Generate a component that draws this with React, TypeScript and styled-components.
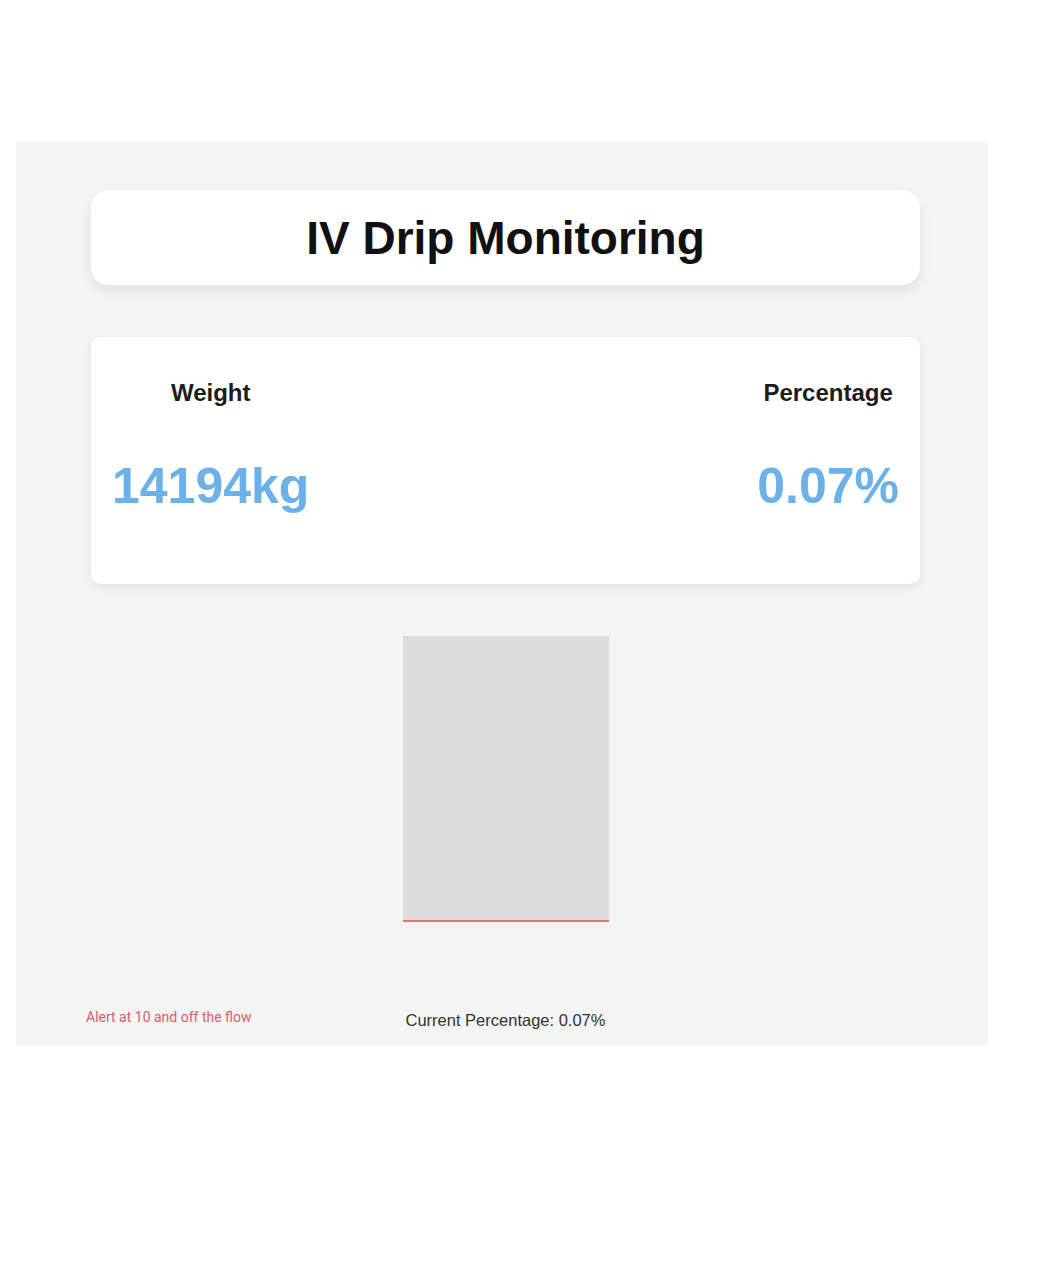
import React from 'react';
import styled, { createGlobalStyle } from 'styled-components';

const GlobalStyle = createGlobalStyle`
  html, body {
    margin: 0;
    padding: 0;
    background: #ffffff;
    font-family: 'Liberation Sans', Arial, sans-serif;
  }
`;

const Page = styled.div`
  width: 1040px;
  min-height: 1280px;
  padding-top: 142px;
  box-sizing: border-box;
`;

const Panel = styled.main`
  margin-left: 16px;
  width: 972px;
  box-sizing: border-box;
  padding: 48px 68px 16px 75px;
  background: #f4f4f4;
  display: flex;
  flex-direction: column;
  align-items: stretch;
`;

const TitleCard = styled.header`
  height: 95px;
  border-radius: 18px;
  background: #ffffff;
  box-shadow: 0 6px 14px rgba(0, 0, 0, 0.08);
  display: flex;
  align-items: center;
  justify-content: center;
`;

const Title = styled.h1`
  margin: 0;
  font-size: 46px;
  line-height: 52px;
  font-weight: 700;
  color: #111111;
`;

const StatsCard = styled.section`
  margin-top: 52px;
  height: 247px;
  box-sizing: border-box;
  padding: 42px 21px 0;
  border-radius: 10px;
  background: #ffffff;
  box-shadow: 0 4px 12px rgba(0, 0, 0, 0.07);
  display: flex;
  justify-content: space-between;
  align-items: flex-start;
`;

const Stat = styled.div`
  display: flex;
  flex-direction: column;
  align-items: center;
`;

const StatLabel = styled.div`
  font-size: 24px;
  line-height: 28px;
  font-weight: 700;
  color: #1c1c1c;
`;

const StatValue = styled.div`
  margin-top: 50px;
  font-size: 50px;
  line-height: 58px;
  font-weight: 700;
  color: #6db1e9;
`;

const BarTrack = styled.div`
  margin: 52px auto 0;
  width: 206px;
  height: 286px;
  background: #dddddd;
  display: flex;
  flex-direction: column;
  justify-content: flex-end;
`;

const BarFill = styled.div`
  background: #e07a7a;
  border-top: 2px solid #e27474;
`;

const Footer = styled.footer`
  margin-top: 86px;
  display: grid;
  grid-template-columns: 1fr auto 1fr;
  align-items: end;
`;

const Alert = styled.div`
  margin-left: -5px;
  padding-bottom: 4px;
  font-family: Roboto, 'Liberation Sans', sans-serif;
  font-size: 14px;
  line-height: 18px;
  color: #d9606a;
`;

const Current = styled.div`
  font-size: 16.5px;
  line-height: 20px;
  color: #333333;
`;

export default function App() {
  const weight = 14194;
  const percentage = 0.07;

  return (
    <Page>
      <GlobalStyle />
      <Panel>
        <TitleCard>
          <Title>IV Drip Monitoring</Title>
        </TitleCard>

        <StatsCard>
          <Stat>
            <StatLabel>Weight</StatLabel>
            <StatValue>{weight}kg</StatValue>
          </Stat>
          <Stat>
            <StatLabel>Percentage</StatLabel>
            <StatValue>{percentage.toFixed(2)}%</StatValue>
          </Stat>
        </StatsCard>

        <BarTrack>
          <BarFill style={{ height: `${percentage}%` }} />
        </BarTrack>

        <Footer>
          <Alert>Alert at 10 and off the flow</Alert>
          <Current>Current Percentage: {percentage.toFixed(2)}%</Current>
          <span />
        </Footer>
      </Panel>
    </Page>
  );
}
